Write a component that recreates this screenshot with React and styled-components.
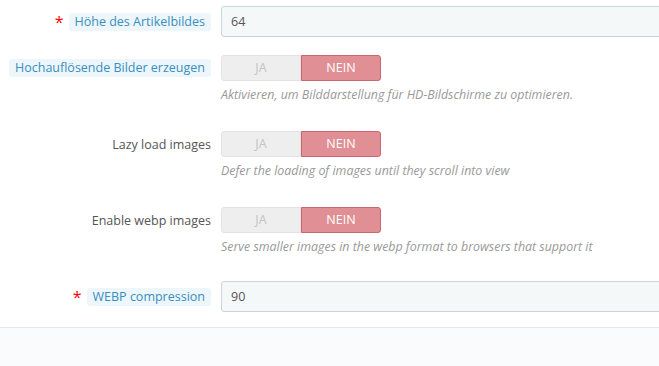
import React from "react";
import styled, { createGlobalStyle } from "styled-components";

const Global = createGlobalStyle`
  html, body { margin: 0; padding: 0; background: #fff; }
  body {
    font-family: "Open Sans", "Liberation Sans", sans-serif;
    font-size: 12.4px;
    color: #555;
    overflow: hidden;
  }
`;

const Page = styled.div`
  width: 659px;
  height: 366px;
  display: flex;
  flex-direction: column;
  overflow: hidden;
`;

const Form = styled.div`
  padding-top: 6px;
  padding-bottom: 15px;
  border-bottom: 1px solid #e6e8ea;
`;

const Group = styled.div`
  display: flex;
  align-items: flex-start;
  margin-bottom: ${(p) => p.$gap}px;
`;

const LabelCol = styled.div`
  width: 211px;
  flex: none;
  display: flex;
  justify-content: flex-end;
  align-items: center;
  height: ${(p) => p.$h}px;
  padding-right: 10px;
  box-sizing: content-box;
  font-size: 12.5px;
  color: #555;
`;

const Req = styled.span`
  color: #f00;
  font-size: 16px;
  line-height: 1;
  margin-right: 5px;
  align-self: flex-start;
  margin-top: ${(p) => p.$top}px;
`;

const Hint = styled.span`
  background: #edf6fb;
  color: #3a8ec0;
  border-radius: 3px;
  padding: 0 6px;
  height: 18px;
  line-height: 18px;
`;

const Control = styled.div`
  flex: none;
  display: flex;
  flex-direction: column;
`;

const TextInput = styled.div`
  width: 520px;
  height: 31px;
  box-sizing: border-box;
  background: #f5f8f9;
  border: 1px solid #c7d6db;
  border-radius: 3px;
  padding-left: 9px;
  line-height: 29px;
  font-size: 12.5px;
  color: #555;
`;

const Switch = styled.div`
  display: flex;
  width: 160px;
  height: 26px;
`;

const Option = styled.div`
  width: 80px;
  box-sizing: border-box;
  text-align: center;
  line-height: 24px;
  font-size: 12.5px;
  text-transform: uppercase;
  background: ${(p) => (p.$on ? "#e08f95" : "#eeeeee")};
  color: ${(p) => (p.$on ? "#fff" : "#c3c3c3")};
  border: 1px solid ${(p) => (p.$on ? "#c9666e" : "#e2e2e2")};
  border-radius: ${(p) => (p.$on ? "0 3px 3px 0" : "3px 0 0 3px")};
`;

const Help = styled.div`
  margin-top: 5px;
  font-size: 12.4px;
  line-height: 18px;
  font-style: italic;
  color: #999;
  white-space: nowrap;
`;

const Footer = styled.div`
  flex: 1;
  background: #fafbfd;
`;

const Toggle = () => (
  <Switch>
    <Option>Ja</Option>
    <Option $on>Nein</Option>
  </Switch>
);

const rows = [
  { type: "input", label: "Höhe des Artikelbildes", hint: true, req: true, value: "64", gap: 18 },
  { type: "toggle", label: "Hochauflösende Bilder erzeugen", hint: true, help: "Aktivieren, um Bilddarstellung für HD-Bildschirme zu optimieren.", gap: 27 },
  { type: "toggle", label: "Lazy load images", help: "Defer the loading of images until they scroll into view", gap: 27 },
  { type: "toggle", label: "Enable webp images", help: "Serve smaller images in the webp format to browsers that support it", gap: 25 },
  { type: "input", label: "WEBP compression", hint: true, req: true, value: "90", gap: 0 },
];

export default function App() {
  return (
    <Page>
      <Global />
      <Form>
        {rows.map((r, i) => {
          const h = r.type === "input" ? 31 : 26;
          return (
            <Group key={i} $gap={r.gap}>
              <LabelCol $h={h}>
                {r.req && <Req $top={h === 31 ? 8 : 5}>*</Req>}
                {r.hint ? <Hint>{r.label}</Hint> : r.label}
              </LabelCol>
              <Control>
                {r.type === "input" ? <TextInput>{r.value}</TextInput> : <Toggle />}
                {r.help && <Help>{r.help}</Help>}
              </Control>
            </Group>
          );
        })}
      </Form>
      <Footer />
    </Page>
  );
}
